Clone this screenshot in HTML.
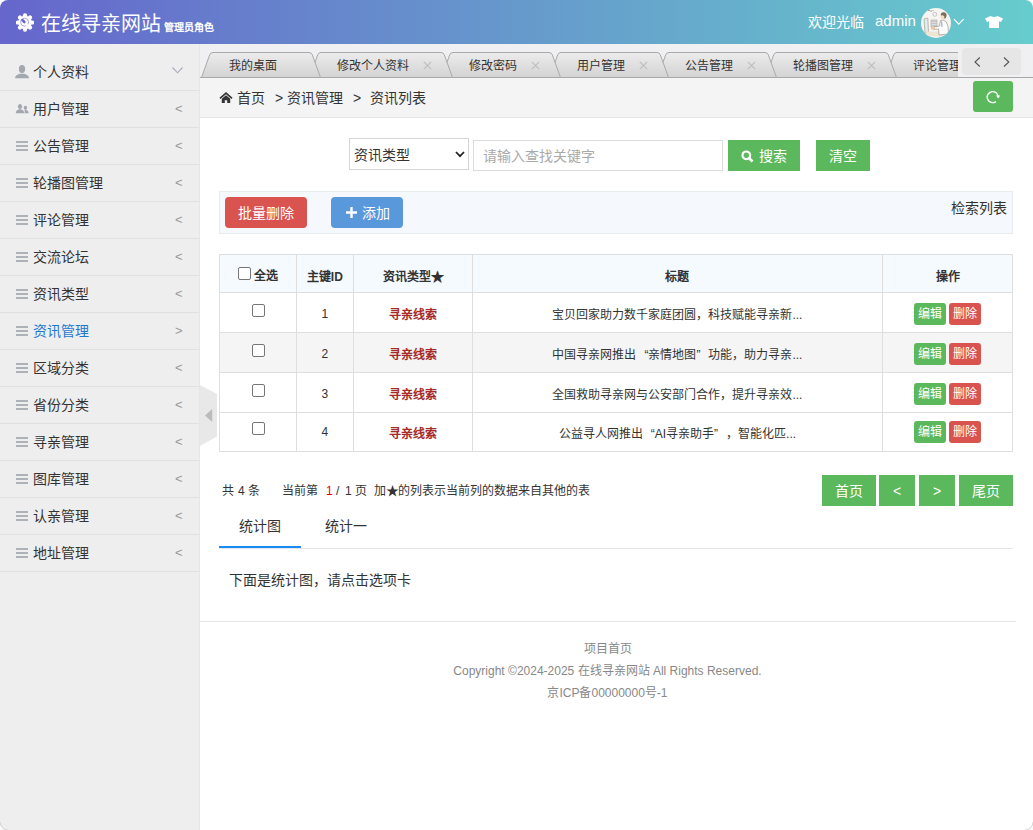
<!DOCTYPE html>
<html lang="zh-CN"><head><meta charset="utf-8">
<style>
*{box-sizing:border-box;margin:0;padding:0}
html,body{width:1033px;height:830px;overflow:hidden;background:#fff;font-family:"Liberation Sans",sans-serif;color:#333}
.abs{position:absolute}
#hdr{position:absolute;left:0;top:0;width:1033px;height:44px;background:linear-gradient(to right,#6666cc,#66cccc);border-radius:8px 8px 0 0;color:#fff}
#side{position:absolute;left:0;top:44px;width:200px;height:786px;background:#eeeeee;border-right:1px solid #e6e6e6;}
.mi{position:absolute;left:0;width:199px;height:38px;border-bottom:1px solid #e0e0e0;font-size:14px;line-height:37px;color:#333}
.mi.act{color:#1e77d0}
.mi .t{position:absolute;left:33px;top:1px}
.mi .ar{position:absolute;left:175px;top:0;color:#999;font-size:13px}
.mi .ic{position:absolute}
.hb{position:absolute;left:16px;width:12px;height:2px;background:#adb1b8}
#tabs{position:absolute;left:200px;top:44px;width:833px;height:34px;background:#f0f0f2}
#tabsclip{position:absolute;left:0;top:8px;width:758px;height:26px;overflow:hidden}
.tab{position:absolute;top:0;height:26px}
.tab svg{position:absolute;left:0;top:0}
.tab .tt{position:absolute;top:1px;font-size:12px;line-height:26px;color:#333;white-space:nowrap}
.tab svg.tx{position:absolute}
#tabline{position:absolute;left:0;top:33px;width:833px;height:1px;background:#a8a8a8}
#tabnav{position:absolute;left:762px;top:4px;width:59px;height:27px;background:#e6e6e6;border-radius:4px}
#crumb{position:absolute;left:200px;top:78px;width:833px;height:40px;background:#f4f4f4;border-bottom:1px solid #e5e5e5;font-size:14px;line-height:40px}
.btn{position:absolute;color:#fff;font-size:14px;text-align:center}
.g{background:#5cb85c}.r{background:#d9534f}
#tbl{position:absolute;left:219px;top:254px;width:794px;border-collapse:collapse;font-size:12px;border-radius:3px}
#tbl td,#tbl th{border:1px solid #dedede;text-align:center;color:#333}
#tbl th{height:38px;padding-top:3px;background:#f5faff;font-weight:bold}
#tbl td{height:40px;padding-top:2px}
#tbl tr:last-child td{height:39px;padding-top:0}
.st{display:inline-block;width:12px;text-align:center;font-style:normal;font-size:13px;line-height:12px}
q1{display:inline-block;width:12px;text-align:right}q2{display:inline-block;width:12px;text-align:left}
#tbl td.typ{color:#a52a2a;font-weight:bold}
.cb{display:inline-block;width:13px;height:13px;border:1px solid #767676;border-radius:2px;background:#fff;vertical-align:middle}
.bs{display:inline-block;width:32px;height:22px;line-height:22px;border-radius:3px;color:#fff;font-size:12px}
.pg{position:absolute;top:475px;height:31px;line-height:33px;overflow:hidden;color:#fff;font-size:14px;text-align:center;background:#5cb85c}
</style></head><body>
<div id="hdr">
  <svg class="abs" style="left:16px;top:13px" width="18" height="19" viewBox="0 0 18 19"><g fill="#fff"><rect x="6.9" y="0.3" width="4.2" height="5" rx="2" transform="rotate(0 9 9.5)"/><rect x="6.9" y="0.3" width="4.2" height="5" rx="2" transform="rotate(45 9 9.5)"/><rect x="6.9" y="0.3" width="4.2" height="5" rx="2" transform="rotate(90 9 9.5)"/><rect x="6.9" y="0.3" width="4.2" height="5" rx="2" transform="rotate(135 9 9.5)"/><rect x="6.9" y="0.3" width="4.2" height="5" rx="2" transform="rotate(180 9 9.5)"/><rect x="6.9" y="0.3" width="4.2" height="5" rx="2" transform="rotate(225 9 9.5)"/><rect x="6.9" y="0.3" width="4.2" height="5" rx="2" transform="rotate(270 9 9.5)"/><rect x="6.9" y="0.3" width="4.2" height="5" rx="2" transform="rotate(315 9 9.5)"/><circle cx="9" cy="9.5" r="6.8"/></g><circle cx="8.6" cy="9.2" r="4" fill="none" stroke="#8a80d8" stroke-width="0.7"/><path d="M6.5 7.2 L8.3 9" stroke="#6666cc" stroke-width="2.6" stroke-linecap="round"/><path d="M9.5 10.3 L13.8 14.6" stroke="#fff" stroke-width="2.4"/></svg>
  <div class="abs" style="left:41px;top:11px;font-size:20px;line-height:26px;white-space:nowrap">在线寻亲网站<b style="font-size:10px;margin-left:3px">管理员角色</b></div>
  <div class="abs" style="left:808px;top:12px;font-size:14px;line-height:20px;white-space:nowrap">欢迎光临</div>
  <div class="abs" style="left:875px;top:11px;font-size:15px;line-height:20px">admin</div>
  <div class="abs" style="left:921px;top:8px;width:30px;height:30px;border-radius:50%;background:#f7f5f2;overflow:hidden">
    <svg width="30" height="30" viewBox="0 0 30 30">
    <path d="M7 2.5 L9 2.5 M10 2.2 L10 4 M11.5 2.5 L12.5 2.5" stroke="#776" stroke-width="0.7"/>
    <circle cx="13.8" cy="6.3" r="2" fill="none" stroke="#aaa" stroke-width="0.6"/>
    <path d="M3 11 L6.8 10 L7.5 24 L4 25Z" fill="#d8eef0" stroke="#b5a898" stroke-width="0.8"/>
    <rect x="10" y="12" width="6" height="7" fill="#ddd" stroke="#999" stroke-width="0.5"/>
    <path d="M10.5 13.5 H15.5 M10.5 15.5 H15.5 M10.5 17.5 H15.5" stroke="#aaa" stroke-width="0.5"/>
    <rect x="5" y="23.5" width="21" height="5" fill="#efe5d3"/>
    <path d="M19.5 12.5 Q22.5 11.5 25 13.5 L27 18 L27.5 26 L18 27 L17.5 21 L13 21.5 L13 19 L18.5 18Z" fill="#fbfbfb" stroke="#8a8580" stroke-width="0.6"/>
    <path d="M20.6 13.5 L21 19" stroke="#6a8ac8" stroke-width="0.8"/>
    <ellipse cx="12" cy="20.3" rx="2.3" ry="1.6" fill="#e9c7a8"/>
    <ellipse cx="21.8" cy="8.4" rx="2.2" ry="2.8" fill="#f3dcc5"/>
    <path d="M19.8 7.5 Q19.5 4 23 4.2 Q26 4.6 25.5 8 Q25 10.5 23.5 11 Q23.8 8 22 7.2Z" fill="#7d6c58"/>
    </svg>
  </div>
  <svg class="abs" style="left:953px;top:18px" width="12" height="8" viewBox="0 0 12 8"><path d="M1 1.2 L5.8 6.2 L10.6 1.2" stroke="#fff" stroke-width="1.2" fill="none"/></svg>
  <svg class="abs" style="left:985px;top:16px" width="18" height="12" viewBox="0 0 18 12"><path d="M5.5 0 Q9 2.2 12.5 0 L18 2.5 L16 6 L14 5.2 L14 12 L4 12 L4 5.2 L2 6 L0 2.5Z" fill="#fff"/></svg>
</div>
<div id="side">
<div class="mi" style="top:9px"><svg class="ic" style="left:15px;top:12px" width="14" height="14" viewBox="0 0 14 14"><ellipse cx="7" cy="4.1" rx="3.1" ry="4" fill="#a3a7ae"/><path d="M0 13.3 C0 10.8 1.5 10 4.6 8.7 L9.4 8.7 C12.5 10 14 10.8 14 13.3Z" fill="#a3a7ae"/></svg><span class="t">个人资料</span><svg class="abs" style="left:172px;top:14px" width="11" height="7" viewBox="0 0 11 7"><path d="M0.5 0.5 L5.5 5.8 L10.5 0.5" stroke="#aab" stroke-width="1.1" fill="none"/></svg></div>
<div class="mi" style="top:46px"><svg class="ic" style="left:15px;top:14px" width="14" height="10" viewBox="0 0 14 10"><ellipse cx="5" cy="2.6" rx="2.1" ry="2.5" fill="#a3a7ae"/><path d="M0.8 9.2 C0.8 6.8 2 5.8 5 5 C8 5.8 9.2 6.8 9.2 9.2Z" fill="#a3a7ae"/><ellipse cx="10.4" cy="3.8" rx="1.7" ry="2.1" fill="#a3a7ae"/><path d="M9.6 9.2 L9.6 6.6 C10 6.1 10.2 5.9 10.4 5.8 C12.3 6.2 13.6 6.9 13.6 9.2Z" fill="#a3a7ae"/></svg><span class="t">用户管理</span><span class="ar">&lt;</span></div>
<div class="mi" style="top:83px"><span class="hb" style="top:14px"></span><span class="hb" style="top:18px"></span><span class="hb" style="top:22px"></span><span class="t">公告管理</span><span class="ar">&lt;</span></div>
<div class="mi" style="top:120px"><span class="hb" style="top:14px"></span><span class="hb" style="top:18px"></span><span class="hb" style="top:22px"></span><span class="t">轮播图管理</span><span class="ar">&lt;</span></div>
<div class="mi" style="top:157px"><span class="hb" style="top:14px"></span><span class="hb" style="top:18px"></span><span class="hb" style="top:22px"></span><span class="t">评论管理</span><span class="ar">&lt;</span></div>
<div class="mi" style="top:194px"><span class="hb" style="top:14px"></span><span class="hb" style="top:18px"></span><span class="hb" style="top:22px"></span><span class="t">交流论坛</span><span class="ar">&lt;</span></div>
<div class="mi" style="top:231px"><span class="hb" style="top:14px"></span><span class="hb" style="top:18px"></span><span class="hb" style="top:22px"></span><span class="t">资讯类型</span><span class="ar">&lt;</span></div>
<div class="mi act" style="top:268px"><span class="hb" style="top:14px"></span><span class="hb" style="top:18px"></span><span class="hb" style="top:22px"></span><span class="t">资讯管理</span><span class="ar">&gt;</span></div>
<div class="mi" style="top:305px"><span class="hb" style="top:14px"></span><span class="hb" style="top:18px"></span><span class="hb" style="top:22px"></span><span class="t">区域分类</span><span class="ar">&lt;</span></div>
<div class="mi" style="top:342px"><span class="hb" style="top:14px"></span><span class="hb" style="top:18px"></span><span class="hb" style="top:22px"></span><span class="t">省份分类</span><span class="ar">&lt;</span></div>
<div class="mi" style="top:379px"><span class="hb" style="top:14px"></span><span class="hb" style="top:18px"></span><span class="hb" style="top:22px"></span><span class="t">寻亲管理</span><span class="ar">&lt;</span></div>
<div class="mi" style="top:416px"><span class="hb" style="top:14px"></span><span class="hb" style="top:18px"></span><span class="hb" style="top:22px"></span><span class="t">图库管理</span><span class="ar">&lt;</span></div>
<div class="mi" style="top:453px"><span class="hb" style="top:14px"></span><span class="hb" style="top:18px"></span><span class="hb" style="top:22px"></span><span class="t">认亲管理</span><span class="ar">&lt;</span></div>
<div class="mi" style="top:490px"><span class="hb" style="top:14px"></span><span class="hb" style="top:18px"></span><span class="hb" style="top:22px"></span><span class="t">地址管理</span><span class="ar">&lt;</span></div>
</div>
<div id="tabs">
  <div id="tabline"></div>
  <div id="tabsclip">
<div class="tab" style="left:1px;width:120px;z-index:20"><svg width="120" height="26" viewBox="0 0 120 26"><defs><linearGradient id="g" x1="0" y1="0" x2="0" y2="1"><stop offset="0" stop-color="#ececec"/><stop offset="1" stop-color="#d3d3d3"/></linearGradient></defs><path d="M0.5 25.5 L8.7 2.8 Q9.6 0.5 12 0.5 L108 0.5 Q110.4 0.5 111.3 2.8 L119.5 25.5 Z" fill="url(#g)" stroke="#a9a9a9" stroke-width="1"/></svg><span class="tt" style="left:28px">我的桌面</span></div>
<div class="tab" style="left:109px;width:144px;z-index:19"><svg width="144" height="26" viewBox="0 0 144 26"><defs><linearGradient id="g" x1="0" y1="0" x2="0" y2="1"><stop offset="0" stop-color="#ececec"/><stop offset="1" stop-color="#d3d3d3"/></linearGradient></defs><path d="M0.5 25.5 L8.7 2.8 Q9.6 0.5 12 0.5 L132 0.5 Q134.4 0.5 135.3 2.8 L143.5 25.5 Z" fill="url(#g)" stroke="#a9a9a9" stroke-width="1"/></svg><span class="tt" style="left:28px">修改个人资料</span><svg class="tx" style="left:114px;top:9px" width="9" height="9" viewBox="0 0 9 9"><path d="M0.8 0.8 L8.2 8.2 M8.2 0.8 L0.8 8.2" stroke="#bdbdbd" stroke-width="1.1"/></svg></div>
<div class="tab" style="left:241px;width:120px;z-index:18"><svg width="120" height="26" viewBox="0 0 120 26"><defs><linearGradient id="g" x1="0" y1="0" x2="0" y2="1"><stop offset="0" stop-color="#ececec"/><stop offset="1" stop-color="#d3d3d3"/></linearGradient></defs><path d="M0.5 25.5 L8.7 2.8 Q9.6 0.5 12 0.5 L108 0.5 Q110.4 0.5 111.3 2.8 L119.5 25.5 Z" fill="url(#g)" stroke="#a9a9a9" stroke-width="1"/></svg><span class="tt" style="left:28px">修改密码</span><svg class="tx" style="left:90px;top:9px" width="9" height="9" viewBox="0 0 9 9"><path d="M0.8 0.8 L8.2 8.2 M8.2 0.8 L0.8 8.2" stroke="#bdbdbd" stroke-width="1.1"/></svg></div>
<div class="tab" style="left:349px;width:120px;z-index:17"><svg width="120" height="26" viewBox="0 0 120 26"><defs><linearGradient id="g" x1="0" y1="0" x2="0" y2="1"><stop offset="0" stop-color="#ececec"/><stop offset="1" stop-color="#d3d3d3"/></linearGradient></defs><path d="M0.5 25.5 L8.7 2.8 Q9.6 0.5 12 0.5 L108 0.5 Q110.4 0.5 111.3 2.8 L119.5 25.5 Z" fill="url(#g)" stroke="#a9a9a9" stroke-width="1"/></svg><span class="tt" style="left:28px">用户管理</span><svg class="tx" style="left:90px;top:9px" width="9" height="9" viewBox="0 0 9 9"><path d="M0.8 0.8 L8.2 8.2 M8.2 0.8 L0.8 8.2" stroke="#bdbdbd" stroke-width="1.1"/></svg></div>
<div class="tab" style="left:457px;width:120px;z-index:16"><svg width="120" height="26" viewBox="0 0 120 26"><defs><linearGradient id="g" x1="0" y1="0" x2="0" y2="1"><stop offset="0" stop-color="#ececec"/><stop offset="1" stop-color="#d3d3d3"/></linearGradient></defs><path d="M0.5 25.5 L8.7 2.8 Q9.6 0.5 12 0.5 L108 0.5 Q110.4 0.5 111.3 2.8 L119.5 25.5 Z" fill="url(#g)" stroke="#a9a9a9" stroke-width="1"/></svg><span class="tt" style="left:28px">公告管理</span><svg class="tx" style="left:90px;top:9px" width="9" height="9" viewBox="0 0 9 9"><path d="M0.8 0.8 L8.2 8.2 M8.2 0.8 L0.8 8.2" stroke="#bdbdbd" stroke-width="1.1"/></svg></div>
<div class="tab" style="left:565px;width:132px;z-index:15"><svg width="132" height="26" viewBox="0 0 132 26"><defs><linearGradient id="g" x1="0" y1="0" x2="0" y2="1"><stop offset="0" stop-color="#ececec"/><stop offset="1" stop-color="#d3d3d3"/></linearGradient></defs><path d="M0.5 25.5 L8.7 2.8 Q9.6 0.5 12 0.5 L120 0.5 Q122.4 0.5 123.3 2.8 L131.5 25.5 Z" fill="url(#g)" stroke="#a9a9a9" stroke-width="1"/></svg><span class="tt" style="left:28px">轮播图管理</span><svg class="tx" style="left:102px;top:9px" width="9" height="9" viewBox="0 0 9 9"><path d="M0.8 0.8 L8.2 8.2 M8.2 0.8 L0.8 8.2" stroke="#bdbdbd" stroke-width="1.1"/></svg></div>
<div class="tab" style="left:685px;width:120px;z-index:14"><svg width="120" height="26" viewBox="0 0 120 26"><defs><linearGradient id="g" x1="0" y1="0" x2="0" y2="1"><stop offset="0" stop-color="#ececec"/><stop offset="1" stop-color="#d3d3d3"/></linearGradient></defs><path d="M0.5 25.5 L8.7 2.8 Q9.6 0.5 12 0.5 L108 0.5 Q110.4 0.5 111.3 2.8 L119.5 25.5 Z" fill="url(#g)" stroke="#a9a9a9" stroke-width="1"/></svg><span class="tt" style="left:28px">评论管理</span><svg class="tx" style="left:90px;top:9px" width="9" height="9" viewBox="0 0 9 9"><path d="M0.8 0.8 L8.2 8.2 M8.2 0.8 L0.8 8.2" stroke="#bdbdbd" stroke-width="1.1"/></svg></div>
  </div>
  <div id="tabnav"><svg class="abs" style="left:12px;top:9px" width="7" height="10" viewBox="0 0 7 10"><path d="M5.8 0.5 L1 5 L5.8 9.5" stroke="#555" stroke-width="1.1" fill="none"/></svg><svg class="abs" style="left:41px;top:9px" width="7" height="10" viewBox="0 0 7 10"><path d="M1 0.5 L5.8 5 L1 9.5" stroke="#555" stroke-width="1.1" fill="none"/></svg></div>
</div>
<div id="crumb">
  <svg class="abs" style="left:19px;top:14px" width="14" height="12" viewBox="0 0 14 12"><path d="M1 6.3 L7 1.2 L13 6.3" stroke="#333" stroke-width="1.7" fill="none"/><path d="M2.8 6.8 L7 3.3 L11.2 6.8 L11.2 11 L8.2 11 L8.2 8.3 L5.8 8.3 L5.8 11 L2.8 11Z" fill="#333"/></svg>
  <span class="abs" style="left:37px;top:0">首页</span>
  <span class="abs" style="left:75px;top:0">&gt;</span>
  <span class="abs" style="left:87px;top:0">资讯管理</span>
  <span class="abs" style="left:153px;top:0">&gt;</span>
  <span class="abs" style="left:170px;top:0">资讯列表</span>
  <div class="abs g" style="left:773px;top:3px;width:40px;height:31px;border-radius:3px"><svg class="abs" style="left:13px;top:9px" width="15" height="15" viewBox="0 0 15 15"><path d="M12.2 7 A5.5 5.5 0 1 0 9.9 11.6" stroke="#fff" stroke-width="1.4" fill="none"/><path d="M10 5.6 L14.2 5.6 L12.2 8.4Z" fill="#fff"/></svg></div>
</div>

<!-- search -->
<div class="abs" style="left:349px;top:138px;width:120px;height:32px;border:1px solid #d5d5d5;background:#fff;font-size:14px;line-height:32px;padding-left:4px;color:#333">资讯类型<svg class="abs" style="left:105px;top:12px" width="10" height="7" viewBox="0 0 10 7"><path d="M1 1 L5 5.2 L9 1" stroke="#222" stroke-width="1.7" fill="none"/></svg></div>
<div class="abs" style="left:473px;top:140px;width:250px;height:31px;border:1px solid #dcdcdc;background:#fff;font-size:14px;line-height:30px;padding-left:9px;color:#aaa">请输入查找关键字</div>
<div class="btn g" style="left:728px;top:140px;width:72px;height:31px;line-height:32px"><svg style="position:absolute;left:13px;top:10px" width="13" height="13" viewBox="0 0 13 13"><circle cx="5.3" cy="5.3" r="3.8" stroke="#fff" stroke-width="2.2" fill="none"/><path d="M8 8 L11.5 11.5" stroke="#fff" stroke-width="2.6"/></svg><span class="abs" style="left:31px;top:0">搜索</span></div>
<div class="btn g" style="left:816px;top:140px;width:54px;height:31px;line-height:32px">清空</div>

<!-- toolbar -->
<div class="abs" style="left:219px;top:191px;width:794px;height:43px;background:#f5f9fd;border:1px solid #e6ecf0"></div>
<div class="btn r" style="left:225px;top:197px;width:82px;height:31px;line-height:33px;border-radius:4px">批量删除</div>
<div class="btn" style="left:331px;top:197px;width:72px;height:31px;line-height:33px;border-radius:4px;background:#5a98dc"><svg style="position:absolute;left:15px;top:10px" width="11" height="11" viewBox="0 0 11 11"><path d="M5.5 0 V11 M0 5.5 H11" stroke="#fff" stroke-width="2.4"/></svg><span class="abs" style="left:31px;top:0">添加</span></div>
<div class="abs" style="left:951px;top:199px;font-size:14px;line-height:18px;color:#333">检索列表</div>

<table id="tbl">
<colgroup><col style="width:77px"><col style="width:57px"><col style="width:119px"><col style="width:411px"><col style="width:130px"></colgroup>
<tr><th><span class="cb" style="position:relative;top:-4px"></span> 全选</th><th>主键ID</th><th>资讯类型<i class="st">★</i></th><th>标题</th><th>操作</th></tr>
<tr style="background:#fff;"><td><span class="cb" style="margin-top:-8px;margin-left:2px"></span></td><td>1</td><td class="typ">寻亲线索</td><td>宝贝回家助力数千家庭团圆，科技赋能寻亲新...</td><td><span class="bs g">编辑</span> <span class="bs r">删除</span></td></tr>
<tr style="background:#f5f5f5;"><td><span class="cb" style="margin-top:-8px;margin-left:2px"></span></td><td>2</td><td class="typ">寻亲线索</td><td>中国寻亲网推出<q1>“</q1>亲情地图<q2>”</q2>功能，助力寻亲...</td><td><span class="bs g">编辑</span> <span class="bs r">删除</span></td></tr>
<tr style="background:#fff;"><td><span class="cb" style="margin-top:-8px;margin-left:2px"></span></td><td>3</td><td class="typ">寻亲线索</td><td>全国救助寻亲网与公安部门合作，提升寻亲效...</td><td><span class="bs g">编辑</span> <span class="bs r">删除</span></td></tr>
<tr style="background:#fff;height:39px;"><td><span class="cb" style="margin-top:-8px;margin-left:2px"></span></td><td>4</td><td class="typ">寻亲线索</td><td>公益寻人网推出<q1>“</q1>AI寻亲助手<q2>”</q2>，智能化匹...</td><td><span class="bs g">编辑</span> <span class="bs r">删除</span></td></tr>
</table>

<div class="abs" style="left:0;top:483px;font-size:12px;line-height:16px;color:#333;white-space:nowrap">
<span class="abs" style="left:222px">共</span><span class="abs" style="left:238px">4</span><span class="abs" style="left:248px">条</span>
<span class="abs" style="left:282px">当前第</span><span class="abs" style="left:326px;color:#e00">1</span><span class="abs" style="left:336px">/</span><span class="abs" style="left:345px">1</span><span class="abs" style="left:355px">页</span>
<span class="abs" style="left:374px">加<i class="st">★</i>的列表示当前列的数据来自其他的表</span></div>
<div class="pg" style="left:822px;width:54px">首页</div>
<div class="pg" style="left:879px;width:36px">&lt;</div>
<div class="pg" style="left:919px;width:36px">&gt;</div>
<div class="pg" style="left:959px;width:54px">尾页</div>

<div class="abs" style="left:219px;top:548px;width:794px;height:1px;background:#e6e6e6"></div>
<div class="abs" style="left:219px;top:546px;width:82px;height:2px;background:#1a8cf5"></div>
<div class="abs" style="left:239px;top:516px;font-size:14px;line-height:20px;color:#333">统计图</div>
<div class="abs" style="left:325px;top:516px;font-size:14px;line-height:20px;color:#333">统计一</div>
<div class="abs" style="left:229px;top:570px;font-size:14px;line-height:20px;color:#333">下面是统计图，请点击选项卡</div>

<div class="abs" style="left:200px;top:621px;width:816px;height:1px;background:#e6e6e6"></div>
<div class="abs" style="left:200px;top:638px;width:815px;text-align:center;font-size:12px;line-height:22px;color:#888">项目首页<br>Copyright ©2024-2025 在线寻亲网站 All Rights Reserved.<br>京ICP备00000000号-1</div>

<!-- collapse handle -->
<svg class="abs" style="left:200px;top:385px" width="18" height="62" viewBox="0 0 18 62"><path d="M0 0 L17 9 L17 51.5 L0 61Z" fill="#e8e8e8"/><path d="M5 30.5 L12.2 24 L12.2 37Z" fill="#bbb"/></svg>
<svg class="abs" style="left:1023px;top:820px" width="10" height="10" viewBox="0 0 10 10"><path d="M10 2 A8 8 0 0 1 2 10 L10 10Z" fill="#fafafa"/><path d="M10 2 A8 8 0 0 1 2 10" stroke="#ccc" stroke-width="0.8" fill="none"/></svg>
<svg class="abs" style="left:0;top:820px" width="10" height="10" viewBox="0 0 10 10"><path d="M0 2 A8 8 0 0 0 8 10 L0 10Z" fill="#fafafa"/><path d="M0 2 A8 8 0 0 0 8 10" stroke="#ccc" stroke-width="0.8" fill="none"/></svg>
</body></html>
